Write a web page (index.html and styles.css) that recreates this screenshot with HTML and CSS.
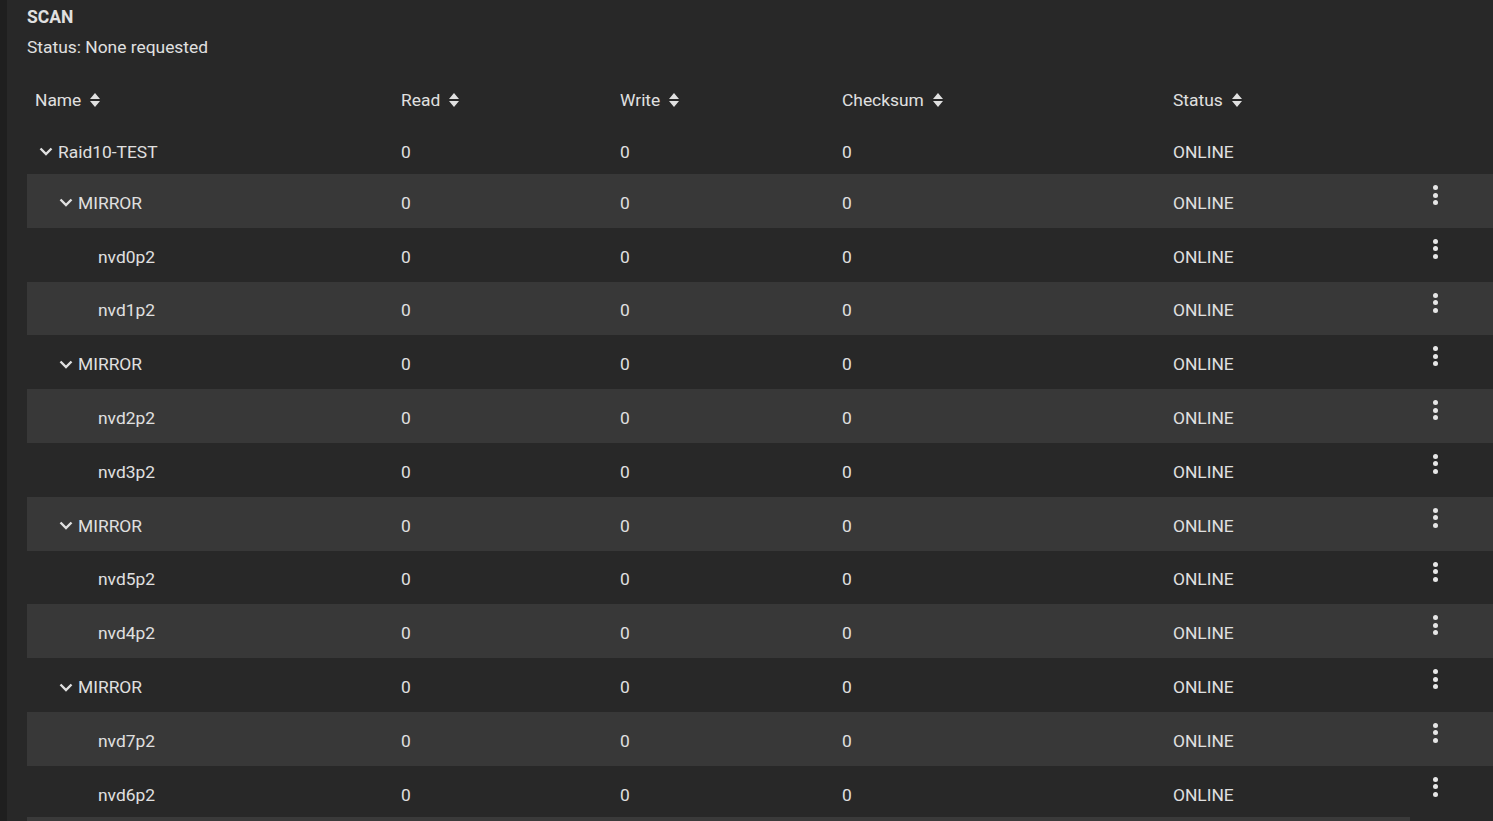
FILE: index.html
```html
<!DOCTYPE html>
<html lang="en">
<head>
<meta charset="UTF-8">
<title>Pool Status</title>
<link rel="stylesheet" href="styles.css">
</head>
<body>
<div class="panel">
    <div class="scan">
        <div class="scan-title">SCAN</div>
        <div class="scan-status">Status: None requested</div>
    </div>

    <div class="table">
        <div class="row head">
            <div class="cell name">Name <svg class="sort" viewBox="0 0 12 16"><path d="M6 1 L11 7 H1 Z M6 15 L11 9 H1 Z"/></svg></div>
            <div class="cell">Read <svg class="sort" viewBox="0 0 12 16"><path d="M6 1 L11 7 H1 Z M6 15 L11 9 H1 Z"/></svg></div>
            <div class="cell">Write <svg class="sort" viewBox="0 0 12 16"><path d="M6 1 L11 7 H1 Z M6 15 L11 9 H1 Z"/></svg></div>
            <div class="cell">Checksum <svg class="sort" viewBox="0 0 12 16"><path d="M6 1 L11 7 H1 Z M6 15 L11 9 H1 Z"/></svg></div>
            <div class="cell">Status <svg class="sort" viewBox="0 0 12 16"><path d="M6 1 L11 7 H1 Z M6 15 L11 9 H1 Z"/></svg></div>
            <div class="cell"></div>
        </div>

        <div class="row pool">
            <div class="cell name lvl0"><svg class="chev" viewBox="0 0 14 9"><path d="M1.5 1.5 L7 7 L12.5 1.5"/></svg>Raid10-TEST</div>
            <div class="cell">0</div><div class="cell">0</div><div class="cell">0</div>
            <div class="cell">ONLINE</div>
            <div class="cell"></div>
        </div>
    </div>

    <div class="table body" id="vdevs"></div>
    <div class="scrollbar"></div>
</div>
<script>
var rows = [
    ['MIRROR', 1], ['nvd0p2', 2], ['nvd1p2', 2],
    ['MIRROR', 1], ['nvd2p2', 2], ['nvd3p2', 2],
    ['MIRROR', 1], ['nvd5p2', 2], ['nvd4p2', 2],
    ['MIRROR', 1], ['nvd7p2', 2], ['nvd6p2', 2]
];
var html = '';
rows.forEach(function (r, i) {
    var chev = r[1] === 1 ? '<svg class="chev" viewBox="0 0 14 9"><path d="M1.5 1.5 L7 7 L12.5 1.5"/></svg>' : '';
    html += '<div class="row' + (i % 2 === 0 ? ' shaded' : '') + '">' +
        '<div class="cell name lvl' + r[1] + '">' + chev + r[0] + '</div>' +
        '<div class="cell">0</div><div class="cell">0</div><div class="cell">0</div>' +
        '<div class="cell">ONLINE</div>' +
        '<div class="cell actions"><span class="dots"><i></i><i></i><i></i></span></div>' +
        '</div>';
});
document.getElementById('vdevs').innerHTML = html;
</script>
</body>
</html>
```

FILE: styles.css
```css
body, html {
    height: 100%;
    margin: 0;
    background: #1f1f1f;
    font-family: Roboto, "Liberation Sans", sans-serif;
    color: #e0e0e0;
    font-size: 17.4px;
    overflow: hidden;
}

.panel {
    margin-left: 7px;
    height: 100%;
    background: #282828;
    padding-left: 20px;
    position: relative;
}

.scan {
    padding-top: 6px;
    height: 68px;
}

.scan-title {
    font-weight: bold;
    font-size: 17.5px;
    line-height: 22px;
}

.scan-status {
    line-height: 22px;
    margin-top: 8px;
}

.row {
    display: grid;
    grid-template-columns: 366px 219px 222px 331px 245px 1fr;
    height: 53.8px;
    align-items: center;
}

.row.head {
    height: 51px;
}

.row.pool {
    height: 49px;
}

.row.shaded {
    background: #383838;
}

.cell {
    padding-left: 8px;
    padding-top: 4px;
    display: flex;
    align-items: center;
    white-space: nowrap;
}

.head .cell {
    padding-top: 1px;
}

.sort {
    width: 12px;
    height: 16px;
    margin-left: 8px;
    fill: #e0e0e0;
}

.chev {
    width: 14px;
    height: 9px;
    margin-right: 5px;
    fill: none;
    stroke: #e0e0e0;
    stroke-width: 2.4;
}

.name.lvl0 {
    padding-left: 12px;
}

.name.lvl1 {
    padding-left: 32px;
}

.name.lvl2 {
    padding-left: 71px;
}

.actions {
    padding-left: 23px;
    padding-top: 0;
    align-self: stretch;
    align-items: flex-start;
}

.dots {
    display: flex;
    flex-direction: column;
    gap: 2.5px;
    padding-top: 11px;
}

.dots i {
    width: 5px;
    height: 5px;
    border-radius: 50%;
    background: #e6e6e6;
}

.scrollbar {
    position: absolute;
    left: 20px;
    top: 817px;
    width: 1383px;
    height: 4px;
    background: #3a3a3a;
}
```
